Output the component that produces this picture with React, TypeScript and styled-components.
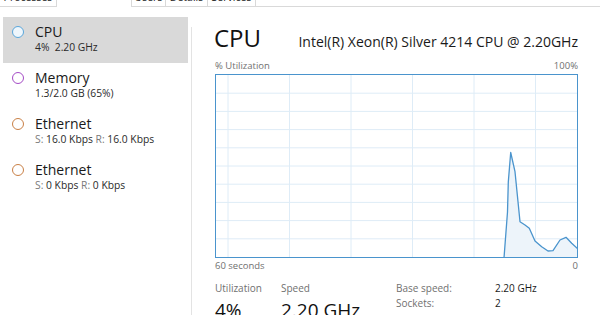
import React from 'react';
import styled, { createGlobalStyle } from 'styled-components';

const GlobalStyle = createGlobalStyle`
  html, body {
    margin: 0;
    padding: 0;
    background: #ffffff;
  }
  body {
    font-family: "Open Sans", "Noto Sans", "Liberation Sans", sans-serif;
    color: #1a1a1a;
    width: 600px;
    height: 315px;
    overflow: hidden;
  }
`;

const Window = styled.div`
  width: 600px;
  height: 315px;
  display: flex;
  flex-direction: column;
  overflow: hidden;
`;

const TabStrip = styled.div`
  display: flex;
  height: 7px;
  overflow: hidden;
  flex-shrink: 0;
`;

const Tab = styled.div<{ $w: number; $selected?: boolean; $first?: boolean }>`
  width: ${p => p.$w}px;
  box-sizing: border-box;
  height: 7px;
  display: flex;
  justify-content: center;
  align-items: flex-end;
  overflow: hidden;
  background: #ffffff;
  border-left: ${p => (p.$first ? '1px solid #d9d9d9' : 'none')};
  border-right: ${p => (p.$selected ? 'none' : '1px solid #d9d9d9')};
  border-bottom: ${p => (p.$selected ? 'none' : '1px solid #d9d9d9')};
  font-size: 10.5px;
  color: ${p => (p.$selected ? 'transparent' : '#1b1b1b')};
`;

const TabLabel = styled.span`
  line-height: 12px;
  margin-bottom: 3px;
  white-space: nowrap;
`;

const TabFiller = styled.div`
  flex: 1;
  box-sizing: border-box;
  height: 7px;
  border-bottom: 1px solid #d9d9d9;
`;

const Body = styled.div`
  flex: 1;
  display: flex;
  min-height: 0;
`;

const Sidebar = styled.div`
  width: 188px;
  box-sizing: border-box;
  padding: 10px 0 0 3px;
  display: flex;
  flex-direction: column;
`;

const Item = styled.div<{ $active?: boolean }>`
  display: flex;
  align-items: flex-start;
  gap: 11px;
  padding: 6px 0 9px 9px;
  background: ${p => (p.$active ? '#d9d9d9' : 'transparent')};
`;

const Dot = styled.span<{ $color: string; $fill: string }>`
  width: 12px;
  height: 12px;
  box-sizing: border-box;
  border-radius: 50%;
  border: 1.5px solid ${p => p.$color};
  background: ${p => p.$fill};
  margin-top: 3px;
  flex-shrink: 0;
`;

const ItemText = styled.div`
  display: flex;
  flex-direction: column;
`;

const ItemTitle = styled.div`
  font-size: 14px;
  line-height: 18px;
  color: #1a1a1a;
`;

const ItemSub = styled.div`
  font-size: 10.3px;
  line-height: 13px;
  color: #2a2a2a;
  white-space: nowrap;
`;

const Muted = styled.span`
  color: #7a7a7a;
`;

const Divider = styled.div`
  width: 1px;
  margin: 20px 0 0 3px;
  background: #e3e3e3;
  flex-shrink: 0;
`;

const Main = styled.div`
  flex: 1;
  padding: 15px 22px 0 23px;
  display: flex;
  flex-direction: column;
  min-width: 0;
`;

const Header = styled.div`
  display: flex;
  justify-content: space-between;
  align-items: baseline;
`;

const BigTitle = styled.div`
  font-size: 24px;
  line-height: 32px;
  color: #111111;
  margin-left: -1px;
`;

const Model = styled.div`
  font-size: 14px;
  line-height: 18px;
  color: #1a1a1a;
  white-space: nowrap;
`;

const AxisRow = styled.div<{ $top: number }>`
  display: flex;
  justify-content: space-between;
  font-size: 9.5px;
  line-height: 12px;
  color: #707070;
  margin-top: ${p => p.$top}px;
`;

const ChartBox = styled.div`
  margin-top: 2px;
  height: 184px;
  box-sizing: border-box;
  border: 1px solid #4a94cd;
`;

const Stats = styled.div`
  display: flex;
  align-items: flex-start;
  margin-top: 10px;
`;

const StatGroup = styled.div`
  display: flex;
  width: 181px;
`;

const Stat = styled.div`
  width: 66px;
  display: flex;
  flex-direction: column;
`;

const StatLabel = styled.div`
  font-size: 10px;
  line-height: 13px;
  color: #707070;
`;

const StatValue = styled.div`
  font-size: 19px;
  line-height: 24px;
  margin-top: 3px;
  color: #111111;
  white-space: nowrap;
`;

const InfoTable = styled.div`
  display: grid;
  grid-template-columns: 99px auto;
  align-content: start;
  font-size: 10px;
  line-height: 15px;
  margin-top: -1px;
`;

const InfoKey = styled.div`
  color: #707070;
`;

const InfoVal = styled.div`
  color: #1a1a1a;
`;

const points: [number, number][] = [
  [289, 184], [292.5, 138], [293.3, 108], [295.7, 78.5], [300, 97.7],
  [305, 147.7], [310, 151], [314.3, 154.3], [320, 167], [326.7, 172.7],
  [333, 177], [338, 176.7], [345, 166], [351, 163.3], [356.7, 169.3], [363, 175],
];

function CpuChart() {
  const w = 361;
  const h = 182;
  const rows = Array.from({ length: 9 }, (_, i) => (i + 1) * (h / 10));
  const cols = [12, 73.5, 135, 196.5, 258, 319.5];
  const line = points.map(([x, y]) => `${x - 1},${y - 1}`).join(' ');
  const area = `${points[0][0] - 1},${h} ${line} ${w},${h}`;
  return (
    <svg width="100%" height="100%" viewBox={`0 0 ${w} ${h}`} preserveAspectRatio="none" style={{ display: 'block' }}>
      {rows.map(y => (
        <line key={`r${y}`} x1={0} x2={w} y1={y} y2={y} stroke="#deecf7" strokeWidth={1} />
      ))}
      {cols.map(x => (
        <line key={`c${x}`} x1={x} x2={x} y1={0} y2={h} stroke="#deecf7" strokeWidth={1} />
      ))}
      <polygon points={area} fill="#edf4fa" />
      <polyline points={line} fill="none" stroke="#4a94cd" strokeWidth={1.3} strokeLinejoin="round" />
    </svg>
  );
}

export default function App() {
  return (
    <Window>
      <GlobalStyle />
      <TabStrip>
        <Tab $w={57}><TabLabel>Processes</TabLabel></Tab>
        <Tab $w={74} $selected><TabLabel>Performance</TabLabel></Tab>
        <Tab $w={35} $first><TabLabel>Users</TabLabel></Tab>
        <Tab $w={42}><TabLabel>Details</TabLabel></Tab>
        <Tab $w={48}><TabLabel>Services</TabLabel></Tab>
        <TabFiller />
      </TabStrip>
      <Body>
        <Sidebar>
          <Item $active>
            <Dot $color="#5aa6da" $fill="#eef6fc" />
            <ItemText>
              <ItemTitle>CPU</ItemTitle>
              <ItemSub>4%&nbsp; 2.20 GHz</ItemSub>
            </ItemText>
          </Item>
          <Item>
            <Dot $color="#a54cc6" $fill="#ffffff" />
            <ItemText>
              <ItemTitle>Memory</ItemTitle>
              <ItemSub>1.3/2.0 GB (65%)</ItemSub>
            </ItemText>
          </Item>
          <Item>
            <Dot $color="#c98046" $fill="#ffffff" />
            <ItemText>
              <ItemTitle>Ethernet</ItemTitle>
              <ItemSub><Muted>S:</Muted> 16.0 Kbps <Muted>R:</Muted> 16.0 Kbps</ItemSub>
            </ItemText>
          </Item>
          <Item>
            <Dot $color="#c98046" $fill="#ffffff" />
            <ItemText>
              <ItemTitle>Ethernet</ItemTitle>
              <ItemSub><Muted>S:</Muted> 0 Kbps <Muted>R:</Muted> 0 Kbps</ItemSub>
            </ItemText>
          </Item>
        </Sidebar>
        <Divider />
        <Main>
          <Header>
            <BigTitle>CPU</BigTitle>
            <Model>Intel(R) Xeon(R) Silver 4214 CPU @ 2.20GHz</Model>
          </Header>
          <AxisRow $top={6}>
            <span>% Utilization</span>
            <span>100%</span>
          </AxisRow>
          <ChartBox>
            <CpuChart />
          </ChartBox>
          <AxisRow $top={2}>
            <span>60 seconds</span>
            <span>0</span>
          </AxisRow>
          <Stats>
            <StatGroup>
              <Stat>
                <StatLabel>Utilization</StatLabel>
                <StatValue>4%</StatValue>
              </Stat>
              <Stat>
                <StatLabel>Speed</StatLabel>
                <StatValue>2.20 GHz</StatValue>
              </Stat>
            </StatGroup>
            <InfoTable>
              <InfoKey>Base speed:</InfoKey>
              <InfoVal>2.20 GHz</InfoVal>
              <InfoKey>Sockets:</InfoKey>
              <InfoVal>2</InfoVal>
            </InfoTable>
          </Stats>
        </Main>
      </Body>
    </Window>
  );
}
